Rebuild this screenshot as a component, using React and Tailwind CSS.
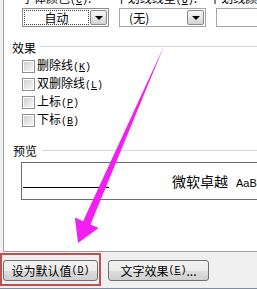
import React from "react";

const Acc = ({ k }) => (
  <span className="font-['Liberation_Mono',monospace] text-[10px]">
    (<span className="underline underline-offset-1">{k}</span>)
  </span>
);

const ArrowBtn = () => (
  <div className="w-[17px] h-full border border-[#8a8a8a] rounded-[2px] bg-[linear-gradient(#f6f6f6_0%,#e6e6e6_50%,#d4d4d4_100%)] flex items-center justify-center">
    <div className="w-0 h-0 border-l-[4px] border-r-[4px] border-t-[4px] border-l-transparent border-r-transparent border-t-black" />
  </div>
);

const Check = ({ label, k }) => (
  <div className="h-[18px] flex items-center pl-[18px] gap-[2px]">
    <div className="w-[13px] h-[13px] border border-[#8e8f8f] bg-white p-[1px]">
      <div className="w-full h-full bg-[linear-gradient(135deg,#cfcfcf_0%,#e8e8e8_60%,#f4f4f4_100%)]" />
    </div>
    <span className="whitespace-nowrap">
      {label}
      <Acc k={k} />
    </span>
  </div>
);

const btn =
  "h-[21px] border border-[#707070] rounded-[3px] bg-[linear-gradient(#f3f3f3_0%,#ebebeb_50%,#dddddd_51%,#cfcfcf_100%)] flex items-center justify-center whitespace-nowrap";

export default function App() {
  return (
    <div className="relative w-[257px] h-[289px] overflow-hidden bg-[#f0f0f0] font-['Noto_Sans_CJK_SC',sans-serif] text-[12px] leading-[12px] text-black">
      <div className="ml-[3px] h-[252px] w-[300px] border-l border-b border-[#a0a0a0] bg-white flex flex-col">
        <div className="-mt-[8px] h-[12px] flex pl-[18px]">
          <div className="w-[113px] whitespace-nowrap">
            字体颜色<Acc k="C" />:
          </div>
          <div className="w-[113px] whitespace-nowrap">
            下划线线型<Acc k="U" />:
          </div>
          <div className="w-[113px] whitespace-nowrap">
            下划线颜色<Acc k="I" />:
          </div>
        </div>
        <div className="mt-[4px] h-[19px] flex gap-[10px] pl-[18px]">
          <div className="w-[103px] h-full border border-[#8c8c8c] flex p-[1px] bg-white">
            <div className="flex-1 border border-dotted border-[#444] flex items-center justify-center mr-[1px]">
              自动
            </div>
            <ArrowBtn />
          </div>
          <div className="w-[103px] h-full border border-[#a5a5a5] flex p-[1px] bg-white">
            <div className="flex-1 flex items-center pl-[8px]">(无)</div>
            <ArrowBtn />
          </div>
          <div className="w-[103px] h-full border border-[#a5a5a5] bg-white" />
        </div>

        <div className="mt-[14px] h-[14px] flex items-center pl-[8px]">
          <span>效果</span>
          <div className="ml-[4px] mb-[3px] flex-1 h-px bg-[#d5d5d5]" />
        </div>
        <div className="mt-[2px] flex flex-col">
          <Check label="删除线" k="K" />
          <Check label="双删除线" k="L" />
          <Check label="上标" k="P" />
          <Check label="下标" k="B" />
        </div>

        <div className="mt-[15px] h-[14px] flex items-center pl-[9px]">
          <span>预览</span>
          <div className="ml-[5px] mb-[1px] flex-1 h-px bg-[#d5d5d5]" />
        </div>
        <div className="mt-[4px] ml-[17px] w-[300px] h-[38px] border border-[#6e6e6e] flex items-start">
          <div className="mt-[24px] ml-[1px] w-[86px] h-px bg-black" />
          <div className="ml-[63px] mt-[11px] whitespace-nowrap leading-[14px]">
            <span className="text-[14px]">微软卓越</span>
            <span className="ml-[8px] font-['Liberation_Sans',sans-serif] text-[11px]">AaBbCc</span>
          </div>
        </div>
      </div>

      <div className="h-[36px] flex items-start">
        <div className="mt-[1px] w-[101px] h-[33px] border-2 border-[#c0504d] pt-[5px] px-[1px]">
          <div className={btn + " w-full"}>
            设为默认值<Acc k="D" />
          </div>
        </div>
        <div className={btn + " ml-[7px] mt-[8px] w-[101px]"}>
          文字效果<Acc k="E" />...
        </div>
      </div>
      <div className="h-px bg-[#7d8ea5]" />

      <svg
        className="absolute inset-0 pointer-events-none"
        width="257"
        height="289"
        viewBox="0 0 257 289"
      >
        <polygon
          points="164,46 90.5,224.4 98.7,228 78,243 74.9,217.6 83.1,221.2"
          fill="#f21ef2"
        />
      </svg>
    </div>
  );
}
